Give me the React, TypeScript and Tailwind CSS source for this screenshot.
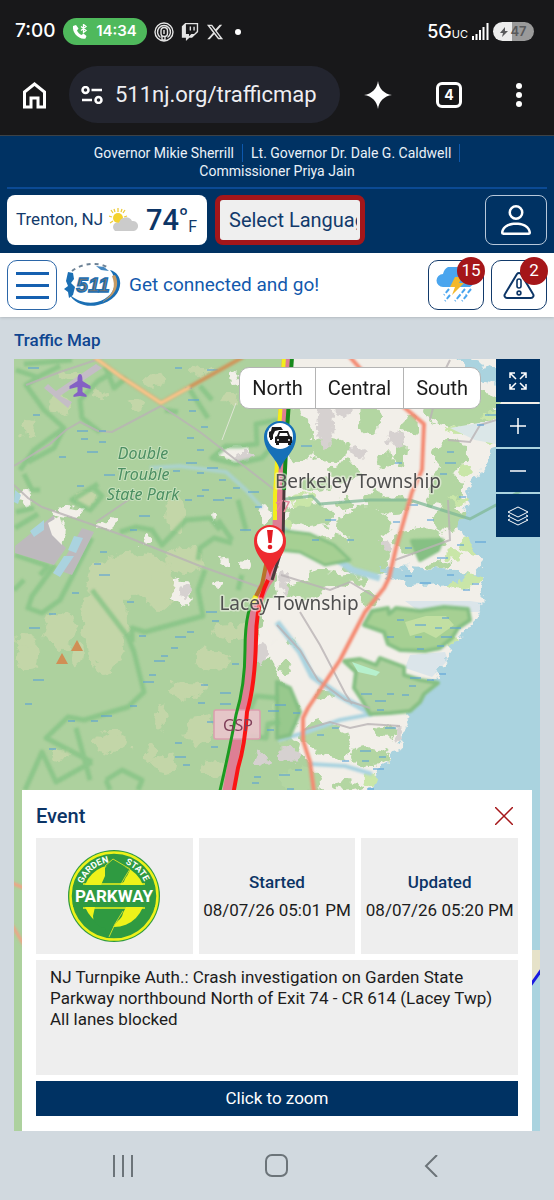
import type { ReactNode } from "react";
import { BsPerson } from "react-icons/bs";
import { FaTwitch, FaXTwitter } from "react-icons/fa6";

// Map geometry lives in one coordinate space (the map's viewBox below).
type Blob = [cx: number, cy: number, rx: number, ry: number];
type Point = [x: number, y: number];

const SCRUB: Blob[] = [
  [155, 380, 9, 7], [200, 372, 12, 5], [60, 405, 12, 9], [135, 405, 8, 5], [175, 515, 9, 18],
  [85, 500, 10, 6], [130, 575, 42, 22], [105, 620, 22, 52], [60, 630, 16, 18], [28, 655, 13, 16],
  [25, 640, 9, 7], [77, 655, 4, 10], [212, 660, 18, 12], [190, 690, 20, 8], [160, 720, 5, 13],
  [112, 742, 18, 11], [165, 765, 12, 9], [200, 730, 14, 14], [215, 768, 13, 8], [235, 632, 24, 8],
  [160, 590, 14, 20], [150, 755, 6, 10], [60, 755, 9, 4], [98, 395, 7, 4], [230, 400, 9, 6],
  [262, 700, 10, 6], [265, 775, 14, 8], [185, 560, 20, 12], [70, 375, 12, 6], [30, 430, 7, 10],
];

const TOWN: Blob[] = [
  [234, 376, 6, 8], [265, 396, 12, 8], [26, 497, 5, 8], [57, 530, 8, 12], [68, 512, 14, 4],
  [108, 524, 8, 5], [146, 540, 5, 4], [233, 453, 14, 6], [265, 515, 6, 9], [225, 560, 4, 5],
  [216, 519, 3, 4], [182, 592, 10, 15], [219, 583, 6, 4], [266, 640, 9, 22], [244, 565, 4, 7],
];

const GREENS: Blob[] = [
  [460, 412, 36, 14], [482, 400, 20, 9], [370, 420, 11, 14], [300, 440, 14, 22], [330, 450, 20, 12],
  [295, 420, 8, 14], [345, 472, 15, 9], [450, 455, 17, 16], [445, 490, 16, 22], [365, 525, 26, 18],
  [365, 555, 26, 20], [420, 540, 26, 14], [450, 520, 16, 12], [395, 505, 16, 10], [310, 515, 24, 12],
  [330, 545, 20, 10], [375, 500, 12, 10], [440, 565, 14, 5], [400, 450, 7, 18], [320, 385, 22, 9],
  [385, 460, 9, 7], [410, 425, 8, 8], [315, 485, 16, 7], [350, 580, 20, 6], [345, 505, 7, 5],
  [305, 590, 20, 9], [325, 578, 18, 8], [368, 598, 10, 7], [290, 640, 6, 5], [285, 668, 8, 4],
  [325, 695, 10, 5], [320, 735, 19, 12], [335, 745, 17, 14], [300, 780, 22, 12], [370, 757, 20, 9],
  [384, 731, 13, 7], [345, 785, 15, 5], [285, 715, 13, 18], [290, 745, 10, 8],
];

const MARSH: Blob[] = [
  [475, 545, 14, 8], [465, 580, 18, 9], [458, 430, 12, 4], [490, 415, 9, 4], [462, 500, 10, 4],
  [452, 640, 6, 8], [440, 620, 18, 11], [370, 780, 9, 6], [302, 500, 12, 6], [286, 525, 9, 7],
  [455, 555, 9, 5], [490, 440, 7, 5], [467, 470, 7, 5],
];

const GREY_AREAS: Blob[] = [
  [325, 425, 9, 22], [343, 408, 9, 10], [396, 440, 10, 9], [357, 452, 8, 5], [285, 582, 5, 12],
  [187, 590, 6, 8], [262, 653, 6, 10], [290, 755, 12, 7], [400, 735, 4, 6], [262, 760, 7, 5],
  [245, 457, 9, 4], [385, 545, 6, 5],
];

const WATER_DASHES: Point[] = [
  [82, 431], [84, 439], [102, 431], [92, 452], [102, 442], [62, 457], [109, 475], [80, 486],
  [188, 388], [193, 400], [192, 411], [204, 427], [212, 370], [178, 368], [36, 415], [33, 368],
  [190, 438], [200, 450], [191, 463], [200, 473], [176, 471], [212, 468], [222, 480], [236, 488],
  [253, 492], [205, 490], [188, 500], [218, 500], [228, 498], [258, 507], [144, 516], [133, 530],
  [200, 496], [245, 530], [103, 552], [97, 564], [104, 575], [75, 593], [52, 614], [34, 628],
  [130, 602], [142, 636], [180, 637], [174, 648], [190, 632], [159, 661], [164, 656], [152, 675],
  [148, 682], [133, 706], [94, 721], [106, 716], [71, 721], [28, 704], [38, 680], [52, 749],
  [201, 703], [225, 704], [204, 685], [210, 722], [225, 693], [214, 747], [186, 765], [180, 757],
  [257, 777], [255, 783], [211, 612], [215, 621], [235, 664], [273, 711], [270, 730], [178, 743],
  [306, 446], [398, 463], [450, 452], [450, 463], [443, 474], [480, 425], [490, 415], [462, 497],
  [430, 520], [412, 505], [396, 522], [408, 548], [442, 558], [460, 545], [450, 575], [330, 520],
  [350, 540], [315, 540], [480, 542], [466, 590], [475, 584], [425, 583], [408, 576], [400, 620],
  [420, 625], [438, 628], [445, 618], [455, 628], [390, 637], [418, 637], [446, 637], [440, 646],
  [420, 649], [415, 678], [430, 680], [442, 674], [366, 694], [390, 694], [405, 695], [380, 701],
  [412, 686], [380, 710], [390, 728], [320, 735], [335, 728], [365, 751], [382, 757], [365, 761],
  [378, 769], [345, 761], [298, 770], [284, 775], [290, 789], [370, 789], [280, 705], [296, 713],
];

// Heavier green bands along park and reserve boundaries
const BOUNDARIES = [
  "M24 364 L72 360 M60 366 L40 376 L26 385 L44 410 L64 428 L34 450 L20 470",
  "M64 428 L54 448 L28 462",
  "M112 373 L98 381 L80 400 L82 418 L100 432 M105 366 L114 388 L126 378",
  "M190 390 L208 418 M200 386 L212 400 M165 410 L178 412",
  "M278 420 L256 424 L257 444 L240 446 L226 446 L212 458 L236 464 L262 458 L278 440",
  "M98 484 L72 500 L90 510 L102 496 L92 486",
  "M24 474 L32 490 L40 490 M16 512 L34 508",
  "M15 528 L38 514 M15 555 L48 566 L40 575 M92 538 L60 600 L42 613 L28 608 L32 596 L55 565",
  "M120 532 L136 527 L152 530 L162 545 L186 520 L210 518 L220 530 M198 560 L200 548 L214 538 L232 543",
  "M92 590 L128 637 L134 652 L144 692 L128 707 L84 720 L68 717 L46 738 L92 762",
  "M205 570 L198 590 L203 616 L145 632 L132 628 L132 642",
  "M76 728 L90 780 M92 762 L56 782 L42 752 L25 790 M106 780 L122 770 L142 780 L138 790 M106 780 L110 790",
  "M278 698 L256 696 L250 710 M280 722 L268 724 L266 738 L250 736",
  "M16 370 L40 378 M14 590 L24 580",
  "M238 500 L246 530 M218 520 L232 540 M242 575 L238 590",
];

const GREY_ROADS = [
  "M14 466 L50 444 L66 430 L80 422 L98 431 L112 432 L161 406 L200 432 L280 494",
  "M14 485 L28 498 L42 507 L122 535 L200 566 L262 588",
  "M96 522 L140 492 M26 385 L60 372 L96 360",
  "M300 612 L320 645 L345 693 L352 704",
  "M277 625 L300 650 L318 680 L345 700 L370 708",
  "M448 440 L470 442 L480 425 L496 420 M448 500 L450 540 L395 560",
  "M303 730 L330 722 L350 728 L368 724 L400 726",
  "M281 575 L330 590 L350 582 L380 600",
  "M430 420 L440 380 L450 360",
];

function TrafficMapCanvas() {
  return (
    <svg
      viewBox="14 359 526 772"
      preserveAspectRatio="xMidYMin slice"
      className="absolute inset-0 h-full w-full"
      role="img"
      aria-label="Traffic map of Berkeley Township and Lacey Township"
    >
      <defs>
        <filter id="rough" x="-5%" y="-5%" width="110%" height="110%">
          <feTurbulence type="fractalNoise" baseFrequency="0.09" numOctaves="3" seed="4" />
          <feDisplacementMap in="SourceGraphic" scale="16" xChannelSelector="R" yChannelSelector="G" />
          <feGaussianBlur stdDeviation="0.5" />
        </filter>
        <filter id="soft">
          <feGaussianBlur stdDeviation="0.8" />
        </filter>
      </defs>

      <rect x="14" y="359" width="526" height="772" fill="#add19e" />
      <g fill="#c3d6a8" filter="url(#rough)">
        {SCRUB.map(([cx, cy, rx, ry]) => (
          <ellipse key={`${cx}-${cy}`} cx={cx} cy={cy} rx={rx} ry={ry} />
        ))}
      </g>

      {/* developed land east of the parkway, then the bay over it */}
      <path
        d="M290 350 L550 350 V800 H325 L312 765 L285 740 L292 700 L278 675 L266 640 L262 610 L275 590 L281 540 L280 480 L290 440 Z"
        fill="#f2efe9"
        filter="url(#rough)"
      />
      <path d="M262 640 L280 690 L292 740 L284 790 H240 L250 720 Z" fill="#add19e" />
      <g fill="#b3d6a2" filter="url(#rough)">
        {GREENS.map(([cx, cy, rx, ry]) => (
          <ellipse key={`${cx}-${cy}`} cx={cx} cy={cy} rx={rx} ry={ry} />
        ))}
      </g>
      <g fill="#c9e6a8" filter="url(#rough)">
        {MARSH.map(([cx, cy, rx, ry]) => (
          <ellipse key={`${cx}-${cy}`} cx={cx} cy={cy} rx={rx} ry={ry} />
        ))}
      </g>
      <g fill="#f2efe9" filter="url(#rough)">
        {TOWN.map(([cx, cy, rx, ry]) => (
          <ellipse key={`${cx}-${cy}`} cx={cx} cy={cy} rx={rx} ry={ry} />
        ))}
      </g>
      <g fill="#d6d1d0" filter="url(#rough)">
        {GREY_AREAS.map(([cx, cy, rx, ry]) => (
          <ellipse key={`${cx}-${cy}`} cx={cx} cy={cy} rx={rx} ry={ry} />
        ))}
      </g>
      <path d="M450 428 L496 420 L496 444 L475 440 Z" fill="#dbe7e8" />
      <path d="M405 601 H470 L484 603 L480 612 H420 Z M410 655 L445 652 L448 660 L432 677 L405 668 Z" fill="#dbe5ea" />

      <g filter="url(#rough)">
        <path
          d="M452 350 L466 368 L482 382 L504 388 L550 388 V1140 H364 L370 790 L380 770 L388 762 L400 745 L408 728 L404 714 L416 700 L424 688 L442 672 L448 660 L446 650 L456 640 L470 622 L478 616 L486 604 L478 596 L484 580 L473 574 L484 562 L475 552 L466 540 L458 522 L470 505 L466 490 L480 474 L492 455 L502 440 L540 430 V388 Z"
          fill="#aad3df"
        />
        <path d="M378 566 L410 568 L470 572 L450 582 L410 586 L390 580 Z" fill="#aad3df" />
      </g>
      <g fill="none" stroke="#aad3df" strokeLinejoin="round" filter="url(#soft)">
        <path d="M277 622 L300 652 L312 676 L340 696 L372 714" strokeWidth="6" />
        <path d="M372 714 L340 720 L304 733 L278 740" strokeWidth="4" />
        <path d="M310 764 L345 766 L372 774" strokeWidth="4" />
        <path d="M332 555 L352 570 L380 578" strokeWidth="7" />
        <path d="M150 468 L180 466 L226 472 L246 490 L262 508" strokeWidth="4" opacity="0.7" />
        <path d="M275 520 L300 542 L334 556" strokeWidth="3" />
      </g>

      {/* wooded points reaching into the bay */}
      <g filter="url(#soft)" stroke="#86c084" strokeWidth="4" strokeLinejoin="round">
        <path
          d="M364 625 L372 611 L388 608 L389 614 L396 608 L420 611 L444 607 L468 609 L470 620 L458 628 L452 638 L440 648 L425 651 L400 650 L388 644 L384 632 Z"
          fill="#a6d093"
        />
        <path
          d="M344 661 L360 659 L376 665 L380 658 L404 667 L404 675 L420 680 L438 683 L424 694 L420 702 L410 711 L390 713 L370 714 L362 700 L354 688 L356 672 Z"
          fill="#add19e"
        />
        <path d="M277 682 L290 688 L300 712 L290 735 L277 738 Z" fill="#98c98d" />
        <path d="M278 530 L310 534 L334 545 L350 560 L325 565 L300 552 L280 550 Z" fill="#a6d093" strokeWidth="3" />
        <path d="M412 541 L442 540 L438 550 L420 560 Z" fill="#86c084" />
      </g>
      <path d="M405 622 L426 616 L446 616 L454 625 L436 638 L424 632 L410 636 Z" fill="#c2dfa2" />
      <path d="M352 662 L380 672 L376 676 L358 672 Z" fill="#b6f0cd" />

      <g fill="none" stroke="#83c384" strokeWidth="5" strokeLinejoin="round" opacity="0.75" filter="url(#soft)">
        {BOUNDARIES.map((d) => (
          <path key={d} d={d} />
        ))}
      </g>
      <path d="M277 500 L312 496 L320 504 L370 500 L410 500 L470 519 L496 505 L540 480" fill="none" stroke="#7fb896" strokeWidth="3" opacity="0.75" />

      {/* airfield and industrial lots */}
      <path d="M96 364 L102 368 L60 396 L72 402 L68 408 L44 388 L48 384 L56 391 Z" fill="#c4bdc6" />
      <path d="M15 546 L54 515 L58 540 L66 548 L54 565 L15 553 Z M82 528 L94 532 L72 575 L58 570 Z" fill="#bdb9bd" />
      <path d="M30 531 L44 520 L44 530 L34 537 Z M74 536 L83 538 L76 553 L68 550 Z M64 556 L74 556 L60 577 L53 573 Z M15 490 L21 495 L18 504 L14 502 Z" fill="#aad3df" />
      <path d="M48 523 L60 516 L62 545 L52 535 Z" fill="#f2efe9" />

      <g fill="none" stroke="#b9b3b5" strokeWidth="2" opacity="0.8">
        {GREY_ROADS.map((d) => (
          <path key={d} d={d} />
        ))}
      </g>
      <path d="M236 403 L222 440" fill="none" stroke="#dfe5d5" strokeWidth="1" />
      <g stroke="#5aa0d8" strokeWidth="1.5" opacity="0.75">
        {WATER_DASHES.map(([x, y], i) => (
          <path key={`${x}-${y}`} d={i % 3 === 0 ? `M${x - 5} ${y} h11` : `M${x - 3} ${y} h7`} />
        ))}
      </g>

      <g fill="none" strokeLinejoin="round" filter="url(#soft)">
        <path d="M94 357 L120 376 L161 403 L243 357" stroke="#cf965c" strokeWidth="4" />
        <path d="M94 357 L120 376 L161 403 L190 387" stroke="#fcc88e" strokeWidth="3" />
        <path
          d="M348 355 L375 385 L405 408 L424 424 L422 470 L412 492 L396 548 L389 578 L384 588 L365 612 L340 660 L308 708 L303 718 L303 740 L310 762 L315 800"
          stroke="#f48a72"
          strokeWidth="4"
        />
        <path d="M12 883 L24 888 M12 925 L24 945" stroke="#f3a185" strokeWidth="3" />
      </g>
      <path d="M532 950 h8 v22 l-8 12 Z" fill="#e6e2c9" />
      <path d="M530 986 L542 969" stroke="#1a1ae0" strokeWidth="3" />

      <path
        d="M80 374 c2 0 2.500 3 2.500 7 l8 5 v3 l-8-2 v5 l4 3 v2 l-6.500-1 l-6.500 1 v-2 l4-3 v-5 l-8 2 v-3 l8-5 c0-4 .5-7 2.500-7"
        fill="#8461c4"
      />
      <path d="M77 640 L83 651 H71 Z M62 653 L68 664 H56 Z" fill="#d08f55" />

      {/* parkway: northbound and southbound condition lines */}
      <g fill="none" strokeLinejoin="round">
        <path d="M287 357 L282 430 L279 500 L276 550 L270 577 Q253 598 250 650 Q249 680 242 710 L226 800" stroke="#dd7f94" strokeWidth="10" />
        <path d="M284 357 L279 430 L275 495 L275 520" stroke="#f2ee1c" strokeWidth="4" />
        <path d="M292 357 L287 430 L284 490" stroke="#188a1c" strokeWidth="4" />
        <path d="M284 490 L283 545 L272 580" stroke="#4a3a3c" strokeWidth="3" />
        <path d="M267 560 L262 585 L254 600" stroke="#b8732a" strokeWidth="4" />
        <path d="M256 596 L252 604" stroke="#f2ee1c" strokeWidth="5" />
      </g>
      <rect x="214" y="710" width="46" height="29" rx="2" fill="#efc4cf" fillOpacity="0.85" stroke="#dc9fae" strokeWidth="1.500" />
      <g fill="none" strokeLinejoin="round">
        <path d="M251 604 Q245 620 245 650 Q245 685 236 715 Q229 752 219 795" stroke="#1b9a20" strokeWidth="3" />
        <path d="M268 580 Q256 604 256 640 Q255 685 247 712 Q245 745 238 768 L233 795" stroke="#fb1414" strokeWidth="4" />
      </g>

      {/* place names stay readable where the parkway crosses them */}
      <g fontFamily="'Noto Sans', sans-serif" textAnchor="middle" paintOrder="stroke" strokeLinejoin="round">
        <g fontSize="16" fontStyle="italic" fill="#4b8f62" stroke="#c6e0bb" strokeWidth="2">
          <text x="143" y="459">Double</text>
          <text x="143" y="480">Trouble</text>
          <text x="143" y="500">State Park</text>
        </g>
        <g fontSize="19" fill="#505050" stroke="#f5f3ef" strokeOpacity="0.55" strokeWidth="3">
          <text x="358" y="488">Berkeley Township</text>
          <text x="289" y="610">Lacey Township</text>
        </g>
        <text x="238" y="731" fontSize="16" fill="#80405a">GSP</text>
      </g>

      {/* congestion pin */}
      <path d="M280 470 C277 458 264 452 264 437 a16 16 0 0 1 32 0 C296 452 283 458 280 470 Z" fill="#1670b8" />
      <circle cx="280" cy="436" r="13" fill="#fff" />
      <path
        d="M269 437 v-5 l2-1 1-4 h9 l2 3 h-4 l-4 1 -2 4 v4 h-1 v1 h-2 v-2 Z M275 443 v-6 l2-1 2-5 h9 l2 5 2 1 v6 h-1 v2 h-3 v-2 h-9 v2 h-3 v-2 Z"
        fill="#1a1a1a"
      />
      <path d="M280 433 h7 l1 3 h-9 Z" fill="#fff" />
      <circle cx="278" cy="440" r="1" fill="#fff" />
      <circle cx="289" cy="440" r="1" fill="#fff" />
      <path d="M276 503 l6 -2 -5 10 M284 501 l5 1 -5 10" fill="none" stroke="#e8889b" strokeWidth="1.500" />

      {/* crash pin */}
      <path d="M270 577 C267 562 254 556 254 541 a16 16 0 0 1 32 0 C286 556 273 562 270 577 Z" fill="#ee2b2f" />
      <circle cx="270" cy="540" r="13" fill="#fff" />
      <path d="M267 530 h6 l-1.500 13 h-3 Z" fill="#e31b23" />
      <circle cx="270" cy="547" r="2.300" fill="#e31b23" />
    </svg>
  );
}

function ParkwayShield() {
  return (
    <svg viewBox="0 0 94 94" className="h-[94px] w-[94px]" role="img" aria-label="Garden State Parkway">
      <defs>
        <path id="arc" d="M14 46 a33 33 0 0 1 66 0" />
      </defs>
      <circle cx="47" cy="47" r="46" fill="#2f9a41" />
      <circle cx="47" cy="47" r="43.500" fill="none" stroke="#eef21a" strokeWidth="2.500" />
      <circle cx="47" cy="47" r="31" fill="#eef21a" />
      <path
        d="M45 10 l18 11 -3 6 c-3 3 -2 6 -5 7 l-2 2 H34 l4 -9 v-8 Z M28 58 h31 l-3 6 c-1 6 -5 7 -8 11 l-8 13 -2 -9 c-6 -1 -12 -5 -12 -12 Z"
        fill="#2f9a41"
      />
      <path d="M38 17 L46 10 L63 20 L58 28 L54 35 M56 62 L48 75 L42 88" fill="none" stroke="#c9dc2a" strokeWidth="1" />
      <rect x="6" y="36" width="82" height="22" fill="#2f9a41" />
      <path d="M16 35 H78 M16 59 H78" stroke="#eef21a" strokeWidth="1.500" />
      <g fill="#fff" fontFamily="Roboto, sans-serif" fontWeight="700" textAnchor="middle">
        <text x="47" y="53" fontSize="17">PARKWAY</text>
        <text fontSize="9">
          <textPath href="#arc" startOffset="28%">GARDEN</textPath>
        </text>
        <text fontSize="9">
          <textPath href="#arc" startOffset="74%">STATE</textPath>
        </text>
      </g>
    </svg>
  );
}

function Logo511() {
  return (
    <svg viewBox="0 0 58 46" className="h-[46px] w-[58px] shrink-0" role="img" aria-label="511 New Jersey">
      <path d="M8 9 C18 1 34 0 43 5" fill="none" stroke="#6d8296" strokeWidth="2" strokeDasharray="4 4" />
      <path d="M32 4 l8 1 5 4 -8 -1 Z" fill="#4487c0" />
      <path d="M46 8 C62 12 60 38 34 43 C22 46 10 41 5 32 C14 40 24 42 33 40 C50 36 56 20 46 8 Z" fill="#1b6fb4" />
      <path d="M51 13 C57 24 50 35 38 40 C50 32 52 24 48 14 Z" fill="#c79a63" />
      <path d="M4 10 l5 1 1 6 -3 4 4 4 -2 8 -4 3 -1 -6 -4 -3 4 -3 -2 -5 Z" fill="#1b6fb4" />
      <text
        x="29"
        y="30"
        textAnchor="middle"
        fontFamily="'Liberation Sans', sans-serif"
        fontSize="21"
        fontWeight="700"
        fontStyle="italic"
        fill="#77746c"
        stroke="#1b6fb4"
        strokeWidth="1.300"
      >
        511
      </text>
    </svg>
  );
}

function StatusBar() {
  return (
    <div className="flex h-[63px] items-center justify-between px-[15px] font-[Inter,sans-serif] text-white">
      <div className="flex items-center gap-[7px]">
        <span className="text-[19px] font-medium">7:00</span>
        <span className="flex h-[27px] w-[84px] items-center justify-center gap-2 rounded-full bg-[#4fb95c] text-[15px] font-semibold">
          <svg viewBox="0 0 16 16" className="h-4 w-4" aria-hidden="true">
            <path d="M1 2 l3-1 2.500 3.500 -1.500 2 c1 2 2.500 3.500 4.500 4.500 l2-1.500 3 2.500 -1 2.500 C7 16 0 9 1 2 Z" fill="currentColor" />
            <path d="M9 2.500 l5 4 -2.500 2 V.5 l2.500 2 -5 4" fill="none" stroke="currentColor" strokeWidth="1.300" />
          </svg>
          14:34
        </span>
        <svg viewBox="0 0 20 20" className="h-5 w-5" fill="none" stroke="#e3e3e3" strokeWidth="1.400" aria-hidden="true">
          <circle cx="10" cy="10" r="9" />
          <path d="M6.500 15.500 A6.500 6.500 0 1 1 13.500 15.500" />
          <rect x="7" y="5.500" width="6.500" height="9" rx="3.200" />
          <path d="M10 8 v4 M8 14 v4 h3 v-4" />
        </svg>
        <FaTwitch className="h-[18px] w-[18px] text-[#e3e3e3]" aria-hidden="true" />
        <FaXTwitter className="h-[18px] w-[18px] text-[#e3e3e3]" aria-hidden="true" />
        <span className="ml-1 h-1.5 w-1.5 rounded-full bg-white" />
      </div>
      <div className="flex items-center gap-1 pr-[5px]">
        <span className="flex items-baseline">
          <span className="text-lg font-medium">5G</span>
          <span className="text-[11px]">UC</span>
        </span>
        <svg viewBox="0 0 17 17" className="h-[17px] w-[17px]" fill="currentColor" aria-hidden="true">
          <path d="M0 13h2v4H0zM3.500 11h2v6h-2zM7 7h2v10H7zM10.500 4h2v13h-2zM14.500 0h2v17h-2z" />
        </svg>
        <span className="flex h-[19px] w-[41px] items-center justify-center rounded-full bg-[linear-gradient(90deg,#ececec_47%,#9a9a9a_47%)] text-[13px] font-semibold text-[#58595b]">
          <svg viewBox="0 0 8 10" className="mr-0.5 h-2.5 w-2" fill="currentColor" aria-hidden="true">
            <path d="M5 0 L0 6 H3 L2 10 L8 4 H5 Z" />
          </svg>
          47
        </span>
      </div>
    </div>
  );
}

function BrowserBar() {
  return (
    <div className="flex h-[72px] items-center px-[22px] pb-[9px] text-white">
      <button type="button" aria-label="Home" className="mr-[22px]">
        <svg viewBox="0 0 25 28" className="h-7 w-[25px]" fill="none" stroke="currentColor" strokeWidth="3" aria-hidden="true">
          <path d="M2.500 11 L12.500 3 L22.500 11 V26 H16 V17 H9 V26 H2.500 Z" />
        </svg>
      </button>
      <div className="flex h-[57px] min-w-0 flex-[276] items-center gap-3 rounded-full bg-[#23252f] pl-3 pr-3">
        <svg viewBox="0 0 22 18" className="h-[18px] w-[22px] shrink-0" fill="none" stroke="currentColor" strokeWidth="2.500" aria-hidden="true">
          <circle cx="4.500" cy="4" r="3" />
          <circle cx="17.500" cy="14" r="3" />
          <path d="M10.500 4 H21 M1 14 H11" />
        </svg>
        <input
          aria-label="Address"
          readOnly
          value="511nj.org/trafficmap"
          className="w-full min-w-0 bg-transparent font-[Roboto,sans-serif] text-[22px] text-[#eeeef2] outline-none"
        />
      </div>
      <div className="flex flex-[188] items-center justify-between pl-6">
        <button type="button" aria-label="Assistant">
          <svg viewBox="0 0 28 28" className="h-7 w-7" fill="currentColor" aria-hidden="true">
            <path d="M14 0 C15 7.500 20 13 28 14 C20 15 15 20.500 14 28 C13 20.500 8 15 0 14 C8 13 13 7.500 14 0 Z" />
          </svg>
        </button>
        <button
          type="button"
          aria-label="Open tabs"
          className="flex h-[26px] w-[26px] items-center justify-center rounded-md border-[3px] border-white font-[Inter,sans-serif] text-sm font-bold"
        >
          4
        </button>
        <button type="button" aria-label="More" className="flex flex-col gap-[3px] px-2.5">
          <span className="h-1.5 w-1.5 rounded-full bg-white" />
          <span className="h-1.5 w-1.5 rounded-full bg-white" />
          <span className="h-1.5 w-1.5 rounded-full bg-white" />
        </button>
      </div>
    </div>
  );
}

function SiteHeader() {
  return (
    <header className="border-t border-[#3c4247] bg-[#003263] px-[7px] pb-2">
      <div className="flex flex-wrap justify-center border-b-2 border-[#0b4a94] px-16 pb-[7px] pt-2 text-sm leading-[18px] text-[#eaf1f8]">
        <span className="border-r border-[#0d58ad] pr-2">Governor Mikie Sherrill</span>
        <span className="border-r border-[#0d58ad] px-2">Lt. Governor Dr. Dale G. Caldwell</span>
        <span>Commissioner Priya Jain</span>
      </div>
      <div className="mt-1.5 flex h-[50px] gap-2">
        <div className="flex w-[200px] items-center rounded-lg bg-white pl-[9px] text-[#123a6b]">
          <span className="whitespace-nowrap text-[17px]">Trenton, NJ</span>
          <svg viewBox="0 0 31 24" className="ml-1.5 h-6 w-[31px] shrink-0" aria-hidden="true">
            <path
              d="M9 4 V0 M4 5 L2 2 M14 5 L16 2 M3 9 L0 8 M4 13 L1 15 M15 9 L18 8 M6 4 L5 1 M12 4 L13 1"
              stroke="#eccb3a"
              strokeWidth="1.300"
            />
            <circle cx="9" cy="10" r="5" fill="#f4d22e" />
            <path d="M6 23 a5 5 0 0 1 0-8 a4 4 0 0 1 4 0 a7 7 0 0 1 13 -2 a5 5 0 0 1 2 10 Z" fill="#cbcbcb" />
          </svg>
          <span className="ml-1.5 text-[29px] font-medium leading-none text-[#0c3566]">74</span>
          <span className="mt-2.5 self-start text-xl font-medium leading-none text-[#0c3566]">º</span>
          <span className="mb-2.5 self-end text-base leading-none">F</span>
        </div>
        <select
          aria-label="Select Language"
          defaultValue="Select Language"
          className="w-[150px] appearance-none rounded-lg border-[5px] border-[#a3161a] bg-[#efefef] pl-[9px] pr-[3px] text-xl text-[#123a6b]"
        >
          <option>Select Language</option>
          <option>Spanish</option>
        </select>
        <button
          type="button"
          aria-label="Account"
          className="ml-auto flex w-[62px] items-center justify-center rounded-lg border border-[#b7c8da] text-white"
        >
          <BsPerson className="h-10 w-10" aria-hidden="true" />
        </button>
      </div>
    </header>
  );
}

function AlertButton({ label, count, children }: { label: string; count: number; children: ReactNode }) {
  return (
    <button
      type="button"
      aria-label={label}
      className="relative flex h-[50px] w-14 items-center justify-center rounded-[10px] border border-[#123a6b] text-[#0c3566]"
    >
      {children}
      <span className="absolute -right-0.5 -top-1 flex h-7 w-7 items-center justify-center rounded-full bg-[#a51619] text-[17px] text-white">
        {count}
      </span>
    </button>
  );
}

function NavBar() {
  return (
    <nav className="flex h-16 items-center bg-white px-[7px] shadow-sm">
      <button
        type="button"
        aria-label="Menu"
        className="flex h-[50px] w-[50px] flex-col items-center justify-center gap-[9px] rounded-[10px] border border-[#2b66a8]"
      >
        <span className="h-[3px] w-[33px] bg-[#1560b0]" />
        <span className="h-[3px] w-[33px] bg-[#1560b0]" />
        <span className="h-[3px] w-[33px] bg-[#1560b0]" />
      </button>
      <a href="#home" className="ml-[7px] flex items-center gap-[7px]">
        <Logo511 />
        <span className="text-[19px] text-[#1259ad]">Get connected and go!</span>
      </a>
      <div className="ml-auto flex gap-[7px]">
        <AlertButton label="Weather alerts" count={15}>
          <svg viewBox="0 0 40 36" className="h-9 w-10" aria-hidden="true">
            <path d="M7 20 a6.500 6.500 0 0 1 0-13 a10 10 0 0 1 19-2 a8 8 0 0 1 8 15 Z" fill="#4aa5ee" />
            <path d="M19 10 h7 l-3 6 h5 L16 28 l3 -8 h-5 Z" fill="#f3b82c" />
            <path
              d="M13 22 l-5 6 M29 22 l-5 6 M35 22 l-5 6 M14 28 l-5 6 M24 28 l-5 6 M31 28 l-5 6"
              fill="none"
              stroke="#4aa5ee"
              strokeWidth="2"
              strokeDasharray="5 2"
            />
          </svg>
        </AlertButton>
        <AlertButton label="Travel alerts" count={2}>
          <svg viewBox="0 0 32 28" className="h-7 w-8" fill="none" stroke="currentColor" strokeWidth="2" strokeLinejoin="round" aria-hidden="true">
            <path d="M14 3 a2.500 2.500 0 0 1 4 0 L30 23 a2.500 2.500 0 0 1 -2 4 H4 a2.500 2.500 0 0 1 -2 -4 Z" />
            <rect x="14" y="8" width="4" height="9" rx="2" strokeWidth="1.600" />
            <circle cx="16" cy="22" r="1.900" strokeWidth="1.600" />
          </svg>
        </AlertButton>
      </div>
    </nav>
  );
}

function MapControls() {
  const button = "flex h-[43px] w-11 items-center justify-center bg-[#003263]";
  return (
    <div className="flex flex-col gap-0.5 text-white">
      <button type="button" aria-label="Full screen" className={button}>
        <svg viewBox="0 0 18 18" className="h-[18px] w-[18px]" fill="none" stroke="currentColor" strokeWidth="1.500" aria-hidden="true">
          <path d="M1 6 V1 H6 M1 1 L7 7 M12 1 H17 V6 M17 1 L11 7 M1 12 V17 H6 M1 17 L7 11 M17 12 V17 H12 M17 17 L11 11" />
        </svg>
      </button>
      <button type="button" aria-label="Zoom in" className={button}>
        <svg viewBox="0 0 16 16" className="h-4 w-4" stroke="currentColor" strokeWidth="1.500" aria-hidden="true">
          <path d="M8 0 V16 M0 8 H16" />
        </svg>
      </button>
      <button type="button" aria-label="Zoom out" className={button}>
        <svg viewBox="0 0 16 16" className="h-4 w-4" stroke="currentColor" strokeWidth="1.500" aria-hidden="true">
          <path d="M0 8 H16" />
        </svg>
      </button>
      <button type="button" aria-label="Layers" className={button}>
        <svg viewBox="0 0 22 20" className="h-5 w-[22px]" fill="none" stroke="currentColor" strokeLinejoin="round" aria-hidden="true">
          <path d="M11 1 L21 6 L11 11 L1 6 Z M3 9 L1 10 L11 15 L21 10 L19 9 M3 13 L1 14 L11 19 L21 14 L19 13" />
        </svg>
      </button>
    </div>
  );
}

function EventCard() {
  return (
    <section aria-labelledby="event-title" className="relative mx-2 bg-white px-[14px] pb-[15px]">
      <div className="flex h-12 items-center justify-between pt-1">
        <h2 id="event-title" className="text-[20px] font-medium text-[#0c3566]">
          Event
        </h2>
        <button type="button" aria-label="Close" className="mr-[5px] text-[#a51619]">
          <svg viewBox="0 0 18 18" className="h-[18px] w-[18px]" stroke="currentColor" strokeWidth="1.500" aria-hidden="true">
            <path d="M0 0 L18 18 M18 0 L0 18" />
          </svg>
        </button>
      </div>
      <div className="grid grid-cols-3 gap-1.5 text-center">
        <div className="flex h-[116px] items-center justify-center bg-[#eeeeee]">
          <ParkwayShield />
        </div>
        <EventTime label="Started" value="08/07/26 05:01 PM" />
        <EventTime label="Updated" value="08/07/26 05:20 PM" />
      </div>
      <p className="mt-1.5 min-h-[115px] bg-[#eeeeee] px-[14px] py-[7px] text-[17px] leading-[21px] text-[#1c1c1c]">
        NJ Turnpike Auth.: Crash investigation on Garden State Parkway northbound North of Exit 74 - CR 614 (Lacey Twp)
        <br />
        All lanes blocked
      </p>
      <button type="button" className="mt-1.5 h-[35px] w-full bg-[#003263] text-[17px] text-white">
        Click to zoom
      </button>
    </section>
  );
}

function EventTime({ label, value }: { label: string; value: string }) {
  return (
    <div className="flex h-[116px] flex-col items-center justify-center bg-[#eeeeee] leading-7">
      <span className="text-[17px] font-medium text-[#0c3566]">{label}</span>
      <span className="whitespace-nowrap text-[17px] text-[#1c1c1c]">{value}</span>
    </div>
  );
}

function SystemNav() {
  return (
    <div className="flex h-[69px] items-center justify-around px-[46px] text-[#6c7479]">
      <button type="button" aria-label="Recents">
        <svg viewBox="0 0 22 22" className="h-[22px] w-[22px]" stroke="currentColor" strokeWidth="2" aria-hidden="true">
          <path d="M2 0 V22 M11 0 V22 M20 0 V22" />
        </svg>
      </button>
      <button type="button" aria-label="Home screen" className="h-[23px] w-[23px] rounded-[7px] border-2 border-current" />
      <button type="button" aria-label="Back">
        <svg viewBox="0 0 22 22" className="h-[22px] w-[22px]" fill="none" stroke="currentColor" strokeWidth="2" aria-hidden="true">
          <path d="M17 0 L6 11 L17 22" />
        </svg>
      </button>
    </div>
  );
}

export default function App() {
  return (
    <div className="min-h-screen bg-[#d1d9df] font-[Roboto,sans-serif]">
      <div className="bg-[#18181a]">
        <StatusBar />
        <BrowserBar />
      </div>
      <SiteHeader />
      <NavBar />
      <main className="px-[14px]">
        <h1 className="flex h-[42px] items-center pt-1.5 text-[17px] font-medium text-[#0f4590]">Traffic Map</h1>
        <div className="relative">
          <TrafficMapCanvas />
          <div className="relative flex h-[431px] items-start justify-end gap-[15px]">
            <div className="mt-2 flex h-[42px] divide-x divide-[#b4b4b4] overflow-hidden rounded-[10px] border border-[#b4b4b4] bg-white text-xl text-[#1c1c1c]">
              <button type="button" className="px-3">North</button>
              <button type="button" className="px-3">Central</button>
              <button type="button" className="px-3">South</button>
            </div>
            <MapControls />
          </div>
          <EventCard />
        </div>
      </main>
      <SystemNav />
    </div>
  );
}
